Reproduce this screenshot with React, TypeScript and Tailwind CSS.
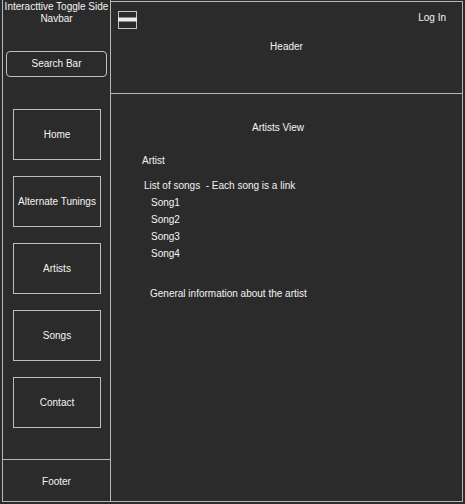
import React from "react";

const navItems = ["Home", "Alternate Tunings", "Artists", "Songs", "Contact"];
const songs = ["Song1", "Song2", "Song3", "Song4"];

function MenuIcon() {
	return (
		<svg width="20" height="19" viewBox="0 0 20 19" className="block">
			<rect x="0.5" y="0.5" width="18" height="17" fill="none" stroke="#c4c4c4" strokeWidth="1" />
			<rect x="0" y="6.5" width="19" height="4" fill="#ececec" />
		</svg>
	);
}

function NavButton({ label }: { label: string }) {
	return (
		<div className="mx-auto flex h-[51px] w-[88px] items-center justify-center border border-[#bdbdbd] text-center">
			{label}
		</div>
	);
}

export default function App() {
	return (
		<div
			className="flex h-[504px] w-[465px] bg-[#2b2b2b] pl-[2px] text-[10px] leading-[12px] text-[#f4f4f4]"
			style={{ fontFamily: '"Liberation Sans", Arial, sans-serif' }}
		>
			{/* side navbar */}
			<aside className="flex h-[502px] w-[109px] flex-col border-b border-l border-r border-[#b8b8b8]">
				<div className="pt-[1px] text-center">
					Interacttive Toggle Side
					<br />
					Navbar
				</div>
				<div className="mx-[3px] mt-[26px] flex h-[26px] items-center justify-center rounded-[4px] border border-[#c2c2c2]">
					Search Bar
				</div>
				<nav className="mt-[32px] flex flex-col gap-[16px] pl-[1px]">
					{navItems.map((item) => (
						<NavButton key={item} label={item} />
					))}
				</nav>
				<div className="mt-auto flex h-[42px] items-center justify-center border-t border-[#b8b8b8] pt-[2px]">
					Footer
				</div>
			</aside>

			{/* main */}
			<main className="mt-[1px] flex h-[501px] w-[352px] flex-col border-b border-r border-t border-[#b8b8b8]">
				<header className="relative h-[92px] border-b border-[#b8b8b8]">
					<div className="flex items-start justify-between pl-[7px] pr-[16px] pt-[9px]">
						<MenuIcon />
						<span className="mt-[1px]">Log In</span>
					</div>
					<div className="mt-[11px] text-center">Header</div>
				</header>
				<section className="pt-[28px]">
					<div className="pl-[141px]">Artists View</div>
					<div className="mt-[21px] pl-[31px]">Artist</div>
					<div className="mt-[13px] pl-[33px] whitespace-pre">List of songs  - Each song is a link</div>
					<ul className="mt-[2px] pl-[40px] leading-[17px]">
						{songs.map((s) => (
							<li key={s}>{s}</li>
						))}
					</ul>
					<div className="mt-[26px] pl-[39px]">General information about the artist</div>
				</section>
			</main>
		</div>
	);
}
